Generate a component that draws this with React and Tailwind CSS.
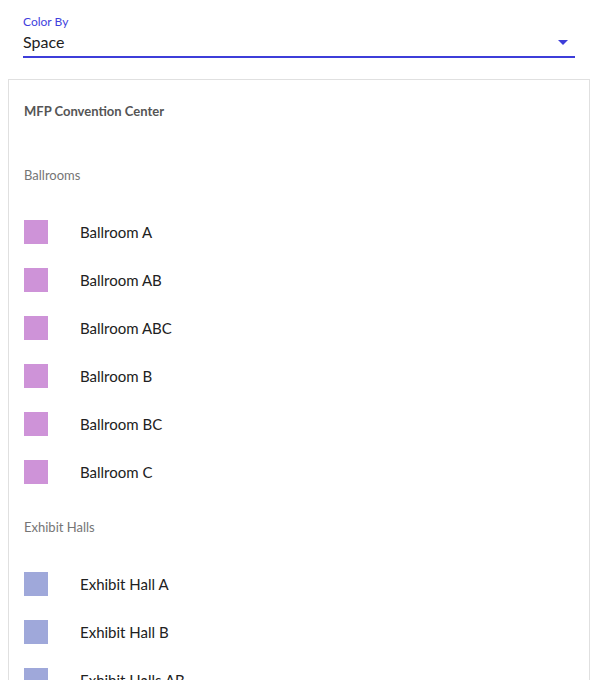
import React from "react";

const sections = [
  {
    name: "Ballrooms",
    color: "bg-[#ce93d8]",
    items: ["Ballroom A", "Ballroom AB", "Ballroom ABC", "Ballroom B", "Ballroom BC", "Ballroom C"],
  },
  {
    name: "Exhibit Halls",
    color: "bg-[#9fa8da]",
    items: ["Exhibit Hall A", "Exhibit Hall B", "Exhibit Halls AB", "Exhibit Hall C"],
  },
];

export default function App() {
  return (
    <div className="h-[680px] overflow-hidden bg-white font-['Lato','Noto_Sans',sans-serif] text-[#212121]">
      <div className="ml-[23px] mr-[18px] pt-[14px]">
        <div className="text-[12px] leading-[16px] text-[#3f3fdd]">Color By</div>
        <div className="flex h-[28px] items-center justify-between border-b-2 border-[#3d3dd9] pb-[2px]">
          <span className="text-[16px] leading-[20px]">Space</span>
          <svg width="10" height="5" viewBox="0 0 10 5" className="mr-[7px]">
            <path d="M0 0h10L5 5z" fill="#3d3dd9" />
          </svg>
        </div>
      </div>

      <div className="ml-[8px] mr-[3px] mt-[21px] border border-[#e0e0e0] px-[15px] pt-[8px]">
        <div className="flex h-12 items-center text-[13px] font-bold text-[#555]">MFP Convention Center</div>
        {sections.map((s, i) => (
          <div key={s.name} className={i === 0 ? "mt-4" : "mt-2"}>
            <div className="flex h-12 items-center text-[13px] text-[#757575]">{s.name}</div>
            <div className="mt-2">
              {s.items.map((it) => (
                <div key={it} className="flex h-12 items-center">
                  <div className={`h-6 w-6 ${s.color}`} />
                  <span className="ml-8 text-[15px]">{it}</span>
                </div>
              ))}
            </div>
          </div>
        ))}
      </div>
    </div>
  );
}
